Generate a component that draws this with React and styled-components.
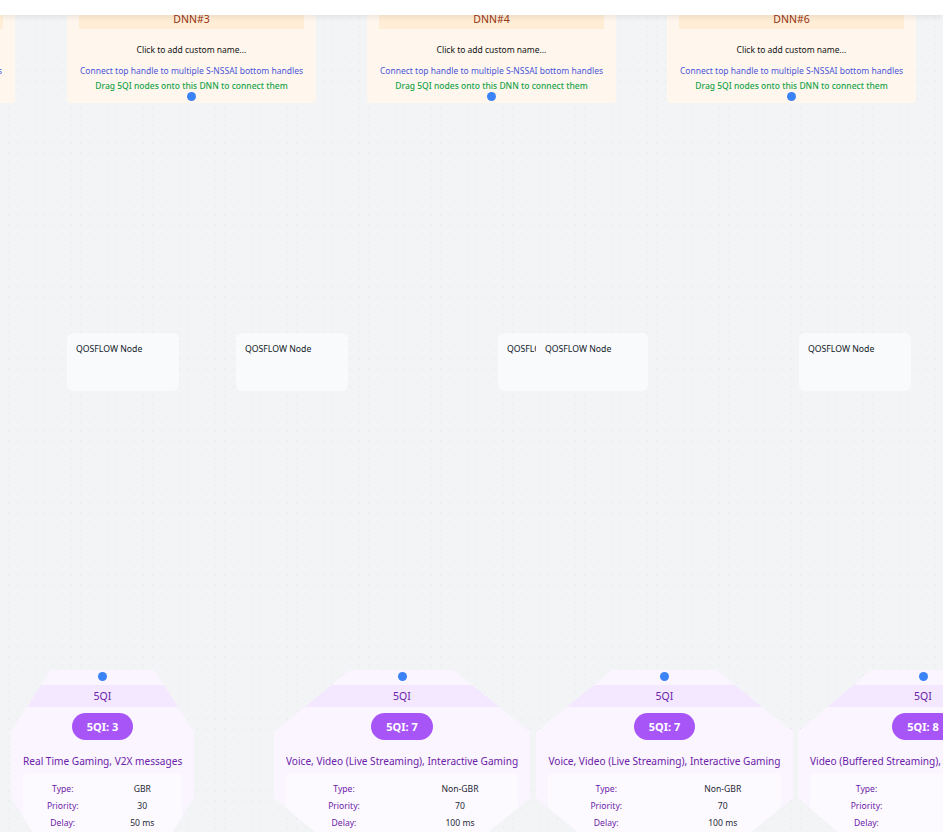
import React from 'react';
import styled, { createGlobalStyle } from 'styled-components';

const GlobalStyle = createGlobalStyle`
  html, body {
    margin: 0;
    padding: 0;
    overflow: hidden;
  }
  body {
    font-family: "Noto Sans", "Open Sans", sans-serif;
  }
`;

const Canvas = styled.div`
  position: relative;
  width: 943px;
  height: 832px;
  overflow: hidden;
  background-color: #f3f4f6;
  background-image: radial-gradient(#e3e5e9 0.8px, transparent 1px);
  background-size: 9px 9px;
  background-position: 4px 4px;
`;

const TopBar = styled.div`
  position: absolute;
  top: 0;
  left: 0;
  right: 0;
  height: 15px;
  background: #ffffff;
  box-shadow: 0 2px 6px rgba(0, 0, 0, 0.08);
  z-index: 10;
`;

const Handle = styled.div`
  position: absolute;
  left: 50%;
  width: 9px;
  height: 9px;
  margin-left: -4.5px;
  border-radius: 50%;
  background: #3b82f6;
  ${(p) => (p.$top !== undefined ? `top: ${p.$top}px;` : `bottom: ${p.$bottom}px;`)}
`;

/* DNN nodes */
const DnnNode = styled.div`
  position: absolute;
  top: -3px;
  width: 249px;
  height: 106px;
  box-sizing: border-box;
  padding: 12px 12px 0;
  background: #fff7ed;
  border-radius: 4px;
  display: flex;
  flex-direction: column;
  align-items: center;
`;

const DnnHeader = styled.div`
  align-self: stretch;
  height: 20px;
  line-height: 20px;
  background: #ffedd5;
  color: #9a3412;
  font-size: 10.5px;
  text-align: center;
`;

const DnnName = styled.div`
  margin-top: 15px;
  font-size: 8.5px;
  line-height: 12px;
  color: #111111;
  white-space: nowrap;
`;

const DnnHint = styled.div`
  margin-top: ${(p) => p.$gap}px;
  font-size: 8.5px;
  line-height: 12px;
  color: ${(p) => p.$color};
  font-weight: ${(p) => p.$weight || 400};
  white-space: nowrap;
`;

/* QOSFLOW nodes */
const QosNode = styled.div`
  position: absolute;
  top: 333px;
  width: 112px;
  height: 58px;
  box-sizing: border-box;
  padding: 10px 9px 9px;
  background: #f8fafc;
  border-radius: 6px;
  font-size: 8.7px;
  line-height: 13px;
  color: #111827;
  white-space: nowrap;
  overflow: hidden;
`;

/* 5QI nodes */
const QiNode = styled.div`
  position: absolute;
  top: 670px;
  height: 190px;
  box-sizing: border-box;
  padding: 15px 0 0;
  background: #faf5ff;
  clip-path: polygon(
    calc(50% - 52px) 0,
    calc(50% + 52px) 0,
    100% 62px,
    100% calc(100% - 62px),
    calc(50% + 52px) 100%,
    calc(50% - 52px) 100%,
    0 calc(100% - 62px),
    0 62px
  );
  display: flex;
  flex-direction: column;
  align-items: center;
`;

const QiHeader = styled.div`
  align-self: stretch;
  height: 22px;
  line-height: 22px;
  background: #f3e8ff;
  color: #6b21a8;
  font-size: 10.5px;
  text-align: center;
`;

const QiPill = styled.div`
  margin-top: 6px;
  height: 27px;
  line-height: 27px;
  padding: 0 15px;
  border-radius: 14px;
  background: #a855f7;
  color: #ffffff;
  font-size: 11px;
  font-weight: 700;
  white-space: nowrap;
`;

const QiTitle = styled.div`
  margin: 14px 12px 0;
  align-self: stretch;
  font-size: 10.1px;
  line-height: 14px;
  color: #6b21a8;
  text-align: center;
  white-space: nowrap;
`;

const QiTable = styled.div`
  margin: 6px 12px 0;
  align-self: stretch;
  padding: 6px 0;
  background: #fdfaff;
  border-radius: 4px;
  display: grid;
  grid-template-columns: 1fr 1fr;
  grid-auto-rows: 17px;
  align-items: center;
  font-size: 8.6px;
  text-align: center;
`;

const QiLabel = styled.span`
  color: #6b21a8;
`;

const QiValue = styled.span`
  color: #1f2937;
`;

const dnns = [
  { left: -234, label: 'DNN#2' },
  { left: 67, label: 'DNN#3' },
  { left: 367, label: 'DNN#4' },
  { left: 667, label: 'DNN#6' },
];

const qosflows = [67, 236, 498, 536, 799];

const qis = [
  { left: 11, width: 183, id: 3, title: 'Real Time Gaming, V2X messages', type: 'GBR', priority: 30, delay: '50 ms' },
  { left: 274, width: 256, id: 7, title: 'Voice, Video (Live Streaming), Interactive Gaming', type: 'Non-GBR', priority: 70, delay: '100 ms' },
  { left: 536, width: 257, id: 7, title: 'Voice, Video (Live Streaming), Interactive Gaming', type: 'Non-GBR', priority: 70, delay: '100 ms' },
  { left: 798, width: 250, id: 8, title: 'Video (Buffered Streaming), TCP-based (e.g., www, e-mail, chat, ftp)', type: 'Non-GBR', priority: 80, delay: '300 ms' },
];

const App = () => {
  return (
    <>
      <GlobalStyle />
      <Canvas>
        <TopBar />

        {dnns.map((d) => (
          <DnnNode key={d.label} style={{ left: d.left }}>
            <DnnHeader>{d.label}</DnnHeader>
            <DnnName>Click to add custom name...</DnnName>
            <DnnHint $gap={9} $color="#4a55d8">
              Connect top handle to multiple S-NSSAI bottom handles
            </DnnHint>
            <DnnHint $gap={3} $color="#16a34a" $weight={500}>
              Drag 5QI nodes onto this DNN to connect them
            </DnnHint>
            <Handle $bottom={2} />
          </DnnNode>
        ))}

        {qosflows.map((left) => (
          <QosNode key={left} style={{ left }}>
            QOSFLOW Node
          </QosNode>
        ))}

        {qis.map((q) => (
          <QiNode key={q.left} style={{ left: q.left, width: q.width }}>
            <Handle $top={2} />
            <QiHeader>5QI</QiHeader>
            <QiPill>5QI: {q.id}</QiPill>
            <QiTitle>{q.title}</QiTitle>
            <QiTable>
              <QiLabel>Type:</QiLabel>
              <QiValue>{q.type}</QiValue>
              <QiLabel>Priority:</QiLabel>
              <QiValue>{q.priority}</QiValue>
              <QiLabel>Delay:</QiLabel>
              <QiValue>{q.delay}</QiValue>
            </QiTable>
          </QiNode>
        ))}
      </Canvas>
    </>
  );
};

export default App;
